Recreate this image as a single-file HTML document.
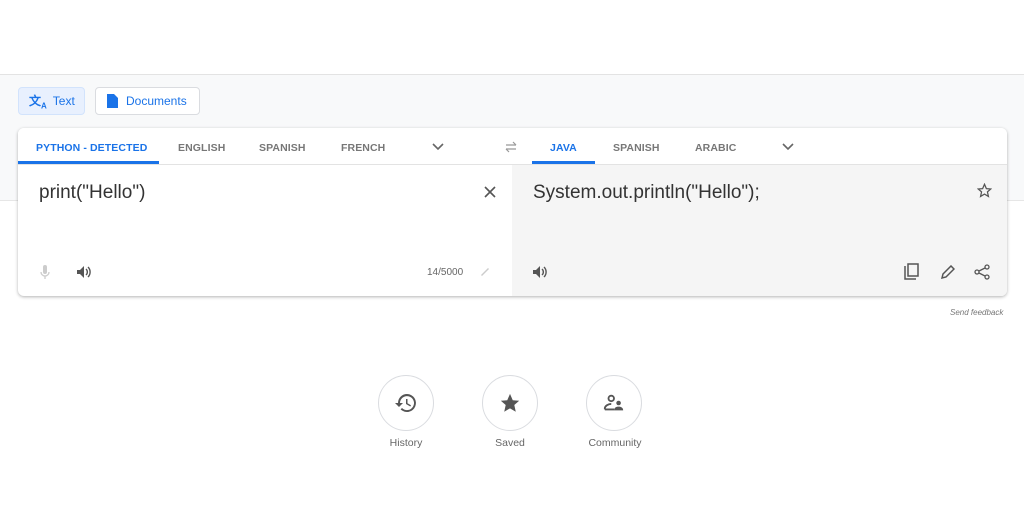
<!DOCTYPE html>
<html><head><style>
*{margin:0;padding:0;box-sizing:border-box}
body{width:1024px;height:512px;background:#fff;font-family:"Liberation Sans",Arial,sans-serif;position:relative;overflow:hidden}
.band{position:absolute;left:0;top:74px;width:1024px;height:127px;background:#f8f9fa;border-top:1px solid #e3e3e3;border-bottom:1px solid #e6e6e6}
.btn{position:absolute;top:87px;height:28px;border:1px solid #dadce0;border-radius:4px;font-size:12px;color:#1a73e8;display:flex;align-items:center;background:#fff}
.card{position:absolute;left:18px;top:128px;width:989px;height:168px;background:#fff;border-radius:6px;box-shadow:0 1px 3px rgba(0,0,0,.3);overflow:hidden}
.tabs{position:absolute;left:0;top:0;width:989px;height:37px;border-bottom:1px solid #e3e3e3;background:#fff}
.tab{position:absolute;top:14px;font-size:10.5px;color:#777;font-weight:bold;letter-spacing:.1px}
.right{position:absolute;left:494px;top:37px;width:495px;height:131px;background:#f5f5f5}
.t{position:absolute;font-size:19px;color:#333}
.circ{position:absolute;top:375px;width:56px;height:56px;border:1px solid #dadce0;border-radius:50%;display:flex;align-items:center;justify-content:center}
.lab{position:absolute;top:437px;font-size:10.5px;color:#666;text-align:center;width:80px}
</style></head><body>
<div class="band"></div>
<div class="btn" style="left:18px;width:67px;background:#e8f0fe;border-color:#d2e3fc">
<span style="margin-left:10px;font-size:12px;font-weight:bold">文<sub style="font-size:8px">A</sub></span><span style="margin-left:6px">Text</span></div>
<div class="btn" style="left:95px;width:105px">
<svg style="margin-left:10px" width="12" height="14" viewBox="0 0 12 14"><path d="M1 0h7l4 4v10H1z" fill="#1a73e8"/></svg><span style="margin-left:8px">Documents</span></div>
<div class="card">
<div class="tabs">
<div class="tab" style="left:18px;color:#1a73e8">PYTHON - DETECTED</div>
<div style="position:absolute;left:0;top:33px;width:141px;height:3px;background:#1a73e8"></div>
<div class="tab" style="left:160px">ENGLISH</div>
<div class="tab" style="left:241px">SPANISH</div>
<div class="tab" style="left:323px">FRENCH</div>
<svg style="position:absolute;left:414px;top:14px" width="12" height="10"><path d="M1 2l5 5 5-5" stroke="#666" stroke-width="1.6" fill="none"/></svg>
<svg style="position:absolute;left:486px;top:13px" width="14" height="12"><path d="M2 4h10M9 1l3 3M12 8H2M5 11L2 8" stroke="#999" stroke-width="1.2" fill="none"/></svg>
<div class="tab" style="left:532px;color:#1a73e8">JAVA</div>
<div style="position:absolute;left:514px;top:33px;width:63px;height:3px;background:#1a73e8"></div>
<div class="tab" style="left:595px">SPANISH</div>
<div class="tab" style="left:677px">ARABIC</div>
<svg style="position:absolute;left:764px;top:14px" width="12" height="10"><path d="M1 2l5 5 5-5" stroke="#666" stroke-width="1.6" fill="none"/></svg>
</div>
<div class="t" style="left:21px;top:54px">print("Hello")</div>
<svg style="position:absolute;left:466px;top:58px" width="12" height="12"><path d="M1 1l10 10M11 1L1 11" stroke="#555" stroke-width="1.6"/></svg>
<svg style="position:absolute;left:22px;top:137px" width="10" height="15"><rect x="3" y="0" width="4" height="9" rx="2" fill="#ccc"/><path d="M1 7a4 4 0 008 0M5 11v3" stroke="#ccc" stroke-width="1.3" fill="none"/></svg>
<svg style="position:absolute;left:59px;top:137px" width="15" height="14"><path d="M0 5h3l4-4v12l-4-4H0z" fill="#555"/><path d="M9 4a4 4 0 010 6M11 2a7 7 0 010 10" stroke="#555" stroke-width="1.4" fill="none"/></svg>
<div style="position:absolute;left:409px;top:139px;font-size:10px;color:#666">14/5000</div>
<svg style="position:absolute;left:461px;top:137px" width="12" height="12"><path d="M2 10l7-7 1 1-7 7z" fill="#ccc"/></svg>
<div class="right">
<div class="t" style="left:21px;top:17px">System.out.println("Hello");</div>
<svg style="position:absolute;left:465px;top:18px" width="15" height="15" viewBox="0 0 24 24"><path d="M12 2l3 7 7 .6-5.3 4.6 1.6 7.3L12 17.8 5.7 21.5l1.6-7.3L2 9.6 9 9z" stroke="#555" stroke-width="2" fill="none"/></svg>
<svg style="position:absolute;left:21px;top:100px" width="15" height="14"><path d="M0 5h3l4-4v12l-4-4H0z" fill="#555"/><path d="M9 4a4 4 0 010 6M11 2a7 7 0 010 10" stroke="#555" stroke-width="1.4" fill="none"/></svg>
<svg style="position:absolute;left:392px;top:98px" width="16" height="17"><path d="M1 3v13h11" stroke="#555" stroke-width="1.5" fill="none"/><rect x="4" y="1" width="10" height="12" stroke="#555" stroke-width="1.5" fill="none"/></svg>
<svg style="position:absolute;left:428px;top:100px" width="15" height="15"><path d="M2 13l1-4 8-8 3 3-8 8z" stroke="#555" stroke-width="1.5" fill="none"/></svg>
<svg style="position:absolute;left:462px;top:99px" width="16" height="16"><circle cx="13" cy="3" r="2" stroke="#555" stroke-width="1.3" fill="none"/><circle cx="3" cy="8" r="2" stroke="#555" stroke-width="1.3" fill="none"/><circle cx="13" cy="13" r="2" stroke="#555" stroke-width="1.3" fill="none"/><path d="M5 7l6-3M5 9l6 3" stroke="#555" stroke-width="1.3"/></svg>
</div>
</div>
<div style="position:absolute;left:950px;top:308px;font-size:8px;color:#777;font-style:italic">Send feedback</div>
<div class="circ" style="left:378px"><svg width="24" height="24" viewBox="0 0 24 24"><path d="M13 3a9 9 0 00-9 9H1l4 4 4-4H6a7 7 0 112 5l-1.4 1.4A9 9 0 1013 3zm-1 5v5l4.3 2.5.7-1.2-3.5-2.1V8z" fill="#555"/></svg></div>
<div class="circ" style="left:482px"><svg width="22" height="22" viewBox="0 0 24 24"><path d="M12 2l3 7 7 .6-5.3 4.6 1.6 7.3L12 17.8 5.7 21.5l1.6-7.3L2 9.6 9 9z" fill="#555"/></svg></div>
<div class="circ" style="left:586px"><svg width="22" height="22" viewBox="0 0 24 24"><circle cx="9" cy="7" r="3" stroke="#555" stroke-width="2" fill="none"/><path d="M2 19v-1c0-3 4-5 7-5M2 19h10" stroke="#555" stroke-width="2" fill="none"/><circle cx="17" cy="12" r="2.5" fill="#555"/><path d="M12 20c0-3 3-4 5-4s5 1 5 4z" fill="#555"/></svg></div>
<div class="lab" style="left:366px">History</div>
<div class="lab" style="left:470px">Saved</div>
<div class="lab" style="left:575px">Community</div>
</body></html>
